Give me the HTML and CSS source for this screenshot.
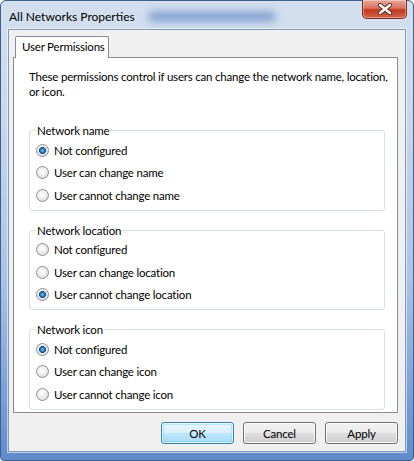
FILE: index.html
```html
<!DOCTYPE html>
<html>
<head>
<meta charset="utf-8">
<link rel="stylesheet" href="styles.css">
</head>
<body>
<div class="window">
  <div class="titlebar">
    <span class="title">All Networks Properties</span>
    <span class="blur"></span>
    <button class="close" aria-label="Close">
      <svg width="16" height="12" viewBox="0 0 16 12">
        <path d="M3 2 L13 10 M13 2 L3 10" stroke="#5a2a22" stroke-width="4.2" stroke-linecap="round"/>
        <path d="M3 2 L13 10 M13 2 L3 10" stroke="#ffffff" stroke-width="2.4" stroke-linecap="round"/>
      </svg>
    </button>
  </div>
  <div class="client">
    <div class="tabs"><div class="tab">User Permissions</div></div>
    <div class="panel">
      <p class="desc">These permissions control if users can change the network name, location,<br>or icon.</p>
      <fieldset class="group">
        <legend>Network name</legend>
        <label class="row"><input type="radio" name="n" class="radio" checked> Not configured</label>
        <label class="row"><input type="radio" name="n" class="radio"> User can change name</label>
        <label class="row"><input type="radio" name="n" class="radio"> User cannot change name</label>
      </fieldset>
      <fieldset class="group">
        <legend>Network location</legend>
        <label class="row"><input type="radio" name="l" class="radio"> Not configured</label>
        <label class="row"><input type="radio" name="l" class="radio"> User can change location</label>
        <label class="row"><input type="radio" name="l" class="radio" checked> User cannot change location</label>
      </fieldset>
      <fieldset class="group">
        <legend>Network icon</legend>
        <label class="row"><input type="radio" name="i" class="radio" checked> Not configured</label>
        <label class="row"><input type="radio" name="i" class="radio"> User can change icon</label>
        <label class="row"><input type="radio" name="i" class="radio"> User cannot change icon</label>
      </fieldset>
    </div>
    <div class="buttons">
      <button class="btn default">OK</button>
      <button class="btn">Cancel</button>
      <button class="btn">Apply</button>
    </div>
  </div>
</div>
</body>
</html>
```
FILE: styles.css
```css
* { box-sizing: border-box; }
html, body { margin: 0; padding: 0; background: #ffffff; }
body {
  font-family: Lato, "Open Sans", sans-serif;
  font-size: 11.5px;
  letter-spacing: -0.2px;
  color: #000;
}
.window {
  width: 414px;
  height: 461px;
  display: flex;
  flex-direction: column;
  padding: 0 7px 8px 7px;
  border: 1px solid #3f5f8c;
  border-radius: 6px 6px 4px 4px;
  background: linear-gradient(180deg, #d3dfee 0%, #c9d8ec 25%, #aac4e6 60%, #7aa2d8 85%, #5f8bcb 100%);
}
.titlebar {
  height: 28px;
  display: flex;
  align-items: center;
  position: relative;
}
.title {
  margin-left: 1px;
  margin-top: 2px;
  font-size: 12px;
  letter-spacing: 0;
  color: #000;
  white-space: nowrap;
}
.blur {
  width: 126px;
  height: 9px;
  margin-left: 14px;
  margin-top: 2px;
  background: #5c84c2;
  filter: blur(4px);
  opacity: 0.75;
}
.close {
  position: absolute;
  top: -1px;
  right: -1px;
  width: 45px;
  height: 19px;
  padding: 0;
  border: 1px solid #7d2d1f;
  border-top: none;
  border-radius: 0 0 5px 5px;
  background: linear-gradient(180deg, #e9a99b 0%, #d9715c 45%, #c2391d 55%, #d3644a 100%);
  box-shadow: inset 0 0 0 1px rgba(255,255,255,0.35);
  display: flex;
  align-items: center;
  justify-content: center;
}
.client {
  flex: 1;
  display: flex;
  flex-direction: column;
  background: #f0f0f0;
  border: 1px solid #8497b3;
  box-shadow: 0 0 0 1px rgba(255,255,255,0.55);
  padding: 6px 7px 7px 4px;
}
.tabs {
  display: flex;
  padding-left: 2px;
  height: 21px;
  position: relative;
  z-index: 1;
}
.tab {
  width: 94px;
  height: 22px;
  background: #ffffff;
  border: 1px solid #898c95;
  border-bottom: none;
  border-radius: 2px 2px 0 0;
  padding-left: 6px;
  line-height: 20px;
  white-space: nowrap;
}
.panel {
  flex: 1;
  background: #ffffff;
  border: 1px solid #898c95;
  padding: 11px 12px 0 15px;
}
.desc {
  margin: 0;
  line-height: 15px;
  white-space: nowrap;
}
.group {
  margin: 24px 0 0 0;
  border: 1px solid #d5dfe5;
  border-radius: 3px;
  padding: 0 6px 3px 6px;
  min-width: 0;
}
.group + .group { margin-top: 12px; }
.group legend {
  padding: 0 1px;
  line-height: 15px;
  color: #000;
}
.row {
  display: flex;
  align-items: center;
  height: 22.5px;
  gap: 5px;
  white-space: nowrap;
}
.group legend + .row { margin-top: 1px; }
.radio {
  appearance: none;
  -webkit-appearance: none;
  margin: 0;
  width: 13px;
  height: 13px;
  border-radius: 50%;
  border: 1px solid #8e8f8f;
  background: radial-gradient(circle at 45% 40%, #ffffff 0%, #f0f0f0 40%, #cfcfcf 100%);
  flex: none;
}
.radio:checked {
  background:
    radial-gradient(circle at 50% 50%, #8fd0f5 0, #2f86c8 1.6px, #16508e 3.2px, rgba(0,0,0,0) 3.8px),
    radial-gradient(circle at 45% 40%, #ffffff 0%, #f0f0f0 40%, #cfcfcf 100%);
}
.buttons {
  display: flex;
  justify-content: flex-end;
  gap: 9px;
  margin-top: 9px;
}
.btn {
  width: 73px;
  height: 22px;
  font-family: inherit;
  font-size: 11.5px;
  letter-spacing: -0.2px;
  color: #000;
  border: 1px solid #707070;
  border-radius: 3px;
  background: linear-gradient(180deg, #f2f2f2 0%, #ebebeb 48%, #dddddd 52%, #cfcfcf 100%);
  box-shadow: inset 0 0 0 1px rgba(255,255,255,0.8);
  padding: 0;
}
.btn.default {
  border-color: #3c7fb1;
  background: linear-gradient(180deg, #eaf6fd 0%, #d9f0fc 48%, #bee6fd 52%, #a7d9f5 100%);
  box-shadow: inset 0 0 0 1px rgba(255,255,255,0.7), inset 0 0 0 2px rgba(72,216,251,0.35);
}
```
